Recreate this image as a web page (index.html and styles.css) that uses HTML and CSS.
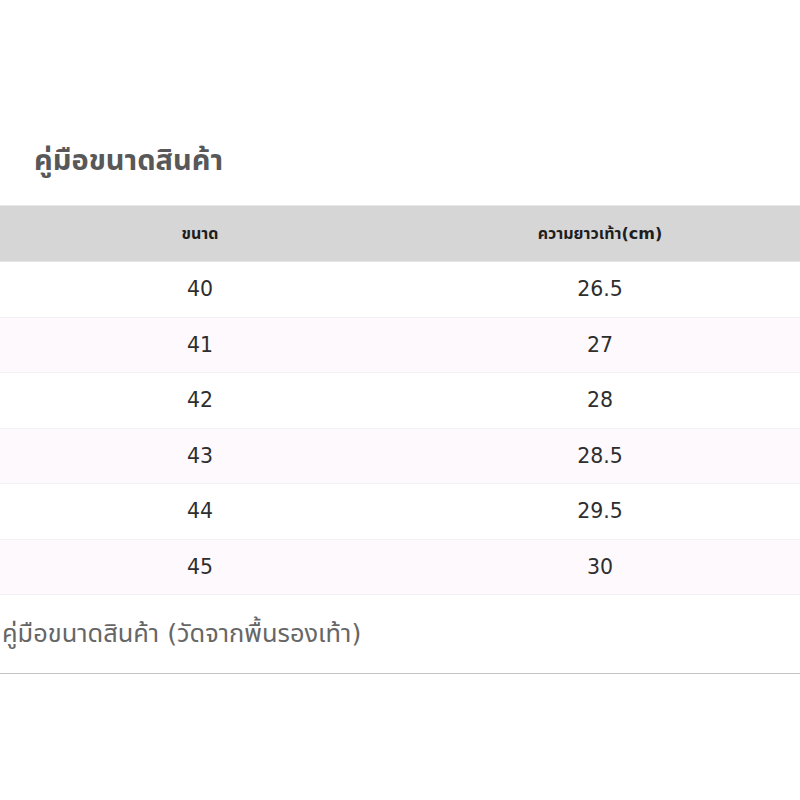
FILE: index.html
```html
<!DOCTYPE html>
<html lang="th">
<head>
<meta charset="utf-8">
<link rel="stylesheet" href="styles.css">
</head>
<body>
<div class="page">
  <h1 class="title">คู่มือขนาดสินค้า</h1>
  <div class="table">
    <div class="row head"><div class="cell">ขนาด</div><div class="cell">ความยาวเท้า(cm)</div></div>
    <div class="row"><div class="cell">40</div><div class="cell">26.5</div></div>
    <div class="row alt"><div class="cell">41</div><div class="cell">27</div></div>
    <div class="row"><div class="cell">42</div><div class="cell">28</div></div>
    <div class="row alt"><div class="cell">43</div><div class="cell">28.5</div></div>
    <div class="row"><div class="cell">44</div><div class="cell">29.5</div></div>
    <div class="row alt"><div class="cell">45</div><div class="cell">30</div></div>
  </div>
  <p class="caption">คู่มือขนาดสินค้า (วัดจากพื้นรองเท้า)</p>
  <div class="rule"></div>
</div>
</body>
</html>
```

FILE: styles.css
```css
html, body {
  margin: 0;
  padding: 0;
  background: #fff;
}
.page {
  font-family: "DejaVu Sans", "Noto Sans Thai", "Noto Sans", sans-serif;
  padding-top: 138px;
}
.title {
  margin: 0 0 0 34px;
  height: 44px;
  line-height: 44px;
  font-size: 29px;
  font-weight: bold;
  color: #585858;
}
.table {
  margin-top: 23px;
  display: flex;
  flex-direction: column;
}
.row {
  display: grid;
  grid-template-columns: 1fr 1fr;
  height: 55.5px;
  box-sizing: border-box;
  border-bottom: 1px solid #f2f2f2;
  align-items: center;
  font-size: 20.5px;
  color: #2e2e2e;
}
.row.alt {
  background: #fdf9fd;
}
.row.head {
  height: 57px;
  background: #d6d6d6;
  border-top: 1px solid #e6e6e6;
  border-bottom: 1px solid #e6e6e6;
  font-size: 16px;
  font-weight: bold;
  color: #1e1e1e;
}
.cell {
  text-align: center;
}
.caption {
  margin: 22px 0 0 2px;
  height: 32px;
  line-height: 32px;
  font-size: 25.4px;
  color: #666;
}
.rule {
  margin-top: 24px;
  height: 1px;
  background: #c4c4c4;
}
```
